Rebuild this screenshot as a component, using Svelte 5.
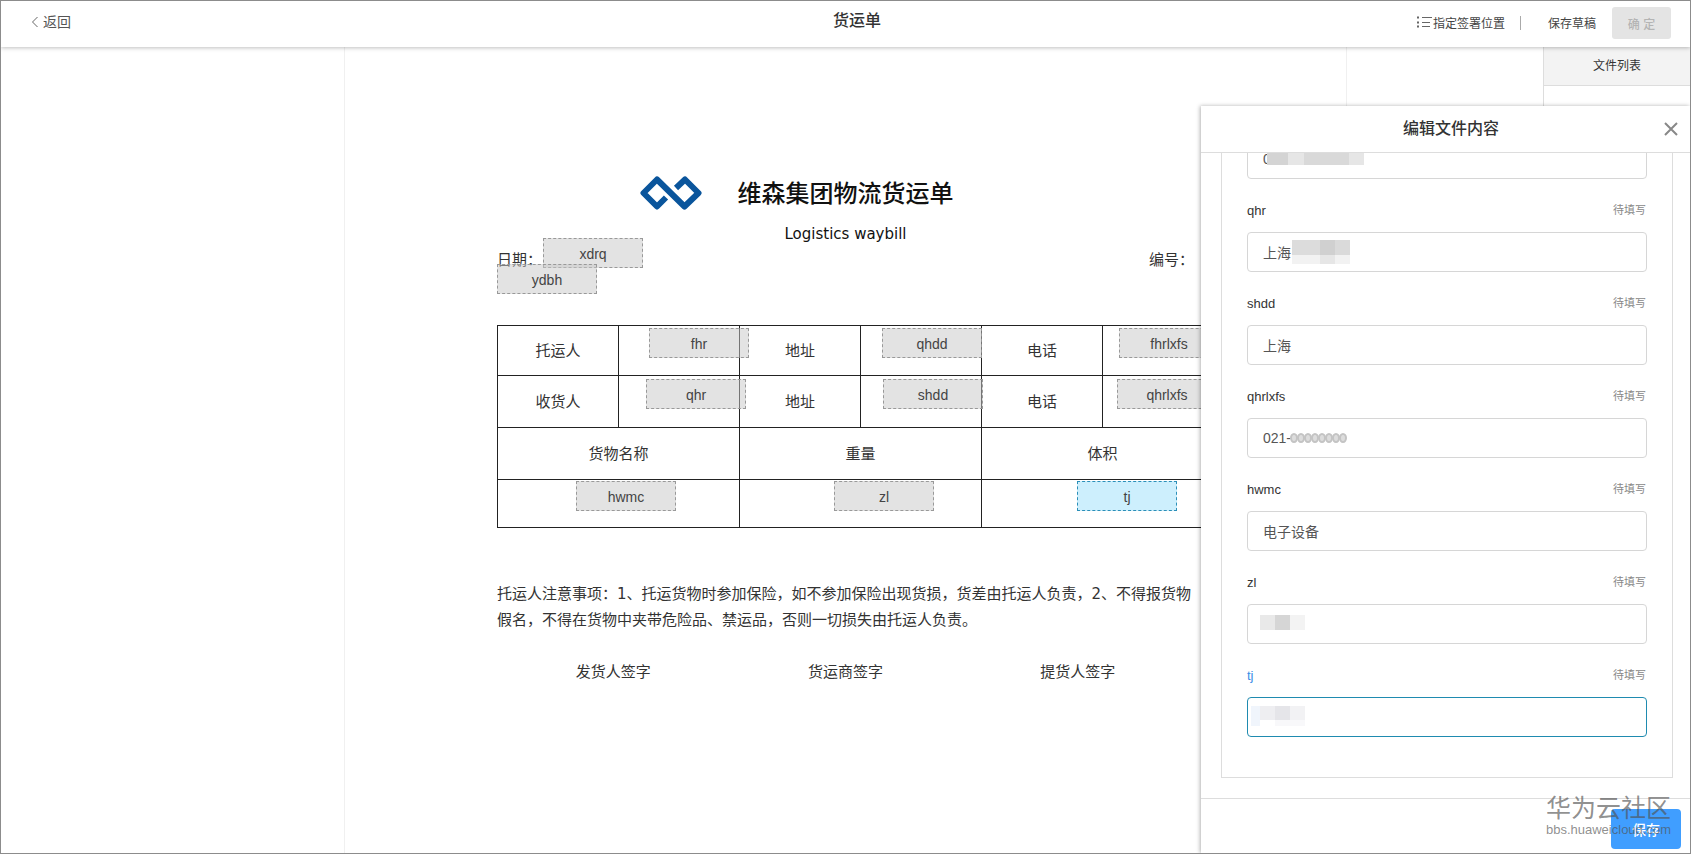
<script lang="ts">
    let tags = [
        { name: "xdrq", x: 198, y: 191 },
        { name: "ydbh", x: 152, y: 217 },
        { name: "fhr", x: 304, y: 281 },
        { name: "qhdd", x: 537, y: 281 },
        { name: "fhrlxfs", x: 774, y: 281 },
        { name: "qhr", x: 301, y: 332 },
        { name: "shdd", x: 538, y: 332 },
        { name: "qhrlxfs", x: 772, y: 332 },
        { name: "hwmc", x: 231, y: 434 },
        { name: "zl", x: 489, y: 434 },
        { name: "tj", x: 732, y: 434 },
    ];

    // mask: [x, y, width, height, colour] blocks hiding part of the value
    let fields = [
        {
            name: "qhr",
            value: "上海",
            mask: [
                [45, 8, 28, 15, "#dcdcdc"],
                [73, 8, 15, 15, "#d0d0d0"],
                [88, 8, 15, 15, "#dadada"],
                [45, 23, 28, 9, "#f2f2f2"],
                [73, 23, 15, 9, "#e6e6e6"],
                [88, 23, 15, 9, "#f2f2f2"],
            ],
        },
        { name: "shdd", value: "上海", mask: [] },
        { name: "qhrlxfs", value: "021-", mask: [], dots: 8 },
        { name: "hwmc", value: "电子设备", mask: [] },
        {
            name: "zl",
            value: "",
            mask: [
                [13, 11, 15, 15, "#e9e9e9"],
                [28, 11, 15, 15, "#d6d6d6"],
                [43, 11, 15, 15, "#f3f3f3"],
            ],
        },
        {
            name: "tj",
            value: "",
            mask: [
                [4, 9, 9, 20, "#f0f5fc"],
                [13, 9, 15, 14, "#eeeef1"],
                [28, 9, 15, 14, "#e5e5e9"],
                [43, 9, 15, 14, "#f2f2f4"],
                [28, 23, 30, 6, "#f8f8fa"],
            ],
        },
    ];

    let active = "tj";
</script>

<div class="app">
    <header>
        <a class="back" href="#back">
            <svg width="8" height="12" viewBox="0 0 8 12"><path d="M6.5 1 1.5 6l5 5" /></svg>
            返回
        </a>
        <h1>货运单</h1>
        <div class="actions">
            <button class="link">
                <svg width="15" height="12" viewBox="0 0 15 12">
                    <path d="M5 1.500h10M5 6.500h8M5 10.500h8" />
                    <path class="bullets" d="M0 1.500h3M0 6.500h3M0 10.500h3" />
                </svg>
                指定签署位置
            </button>
            <span class="divider"></span>
            <button class="link draft">保存草稿</button>
            <button class="confirm" disabled>确 定</button>
        </div>
    </header>

    <main>
        <article>
            <div class="heading">
                <svg class="logo" width="62" height="34" viewBox="0 0 62 34">
                    <path d="M26 21.500 17 30.500 3.500 17 17 3.500 44.500 30.500 58.500 17 45 3.500 36 12" />
                </svg>
                <h2>维森集团物流货运单</h2>
            </div>
            <p class="subtitle">Logistics waybill</p>
            <div class="meta">
                <span>日期：</span>
                <span>编号：</span>
            </div>

            <table>
                <tbody>
                    <tr class="first">
                        <td>托运人</td><td></td><td>地址</td><td></td><td>电话</td><td></td>
                    </tr>
                    <tr>
                        <td>收货人</td><td></td><td>地址</td><td></td><td>电话</td><td></td>
                    </tr>
                    <tr>
                        <td colspan="2">货物名称</td><td colspan="2">重量</td><td colspan="2">体积</td>
                    </tr>
                    <tr class="last">
                        <td colspan="2"></td><td colspan="2"></td><td colspan="2"></td>
                    </tr>
                </tbody>
            </table>

            <p class="notice">
                托运人注意事项：1、托运货物时参加保险，如不参加保险出现货损，货差由托运人负责，2、不得报货物假名，不得在货物中夹带危险品、禁运品，否则一切损失由托运人负责。
            </p>
            <div class="signs">
                <span>发货人签字</span>
                <span>货运商签字</span>
                <span>提货人签字</span>
            </div>

            {#each tags as tag}
                <button
                    class="tag"
                    class:active={tag.name === active}
                    style="left: {tag.x}px; top: {tag.y}px"
                    on:click={() => (active = tag.name)}>{tag.name}</button>
            {/each}
        </article>

        <aside class="files">
            <h3>文件列表</h3>
        </aside>
    </main>

    <section class="drawer">
        <div class="drawer-head">
            <h2>编辑文件内容</h2>
            <button class="close" aria-label="关闭">
                <svg width="14" height="14" viewBox="0 0 14 14"><path d="M1 1l12 12M13 1 1 13" /></svg>
            </button>
        </div>

        <div class="drawer-body">
            <form id="content">
                <div class="control">
                    <input type="text" value="0" aria-label="fhrlxfs" />
                    <svg class="mask" width="120" height="38">
                        <rect x="20" y="12" width="21" height="14" fill="#d4d4d4" />
                        <rect x="41" y="12" width="16" height="14" fill="#e6e6e6" />
                        <rect x="57" y="12" width="45" height="14" fill="#d9d9d9" />
                        <rect x="102" y="12" width="15" height="14" fill="#e6e6e6" />
                    </svg>
                </div>
                {#each fields as field}
                    <div class="field" class:active={field.name === active}>
                        <div class="caption">
                            <label for={field.name}>{field.name}</label>
                            <span>待填写</span>
                        </div>
                        <div class="control">
                            <input
                                type="text"
                                id={field.name}
                                value={field.value}
                                on:focus={() => (active = field.name)}
                            />
                            <svg class="mask" width="120" height="38">
                                {#each field.mask as [x, y, w, h, fill]}
                                    <rect {x} {y} width={w} height={h} {fill} />
                                {/each}
                                {#each Array(field.dots ?? 0) as _, i}
                                    <ellipse cx={47 + i * 7} cy="20" rx="3" ry="4" fill="#ddd" stroke="#c4c4c4" stroke-width="2" />
                                {/each}
                            </svg>
                        </div>
                    </div>
                {/each}
            </form>
        </div>

        <div class="drawer-foot">
            <button class="save" form="content" type="button">保存</button>
            <div class="watermark">
                <strong>华为云社区</strong>
                <span>bbs.huaweicloud.com</span>
            </div>
        </div>
    </section>
</div>

<style>
    :global(body) {
        margin: 0;
    }

    .app {
        position: relative;
        display: flex;
        flex-direction: column;
        box-sizing: border-box;
        height: 100vh;
        border: 1px solid #8c8c8c;
        overflow: hidden;
        background: #fff;
        color: #333;
        font-family: "Liberation Sans", "Noto Sans CJK SC", sans-serif;
        font-size: 14px;
    }

    h1,
    h2,
    h3,
    p {
        margin: 0;
    }

    button {
        padding: 0;
        border: none;
        background: none;
        color: inherit;
        font: inherit;
        cursor: pointer;
    }

    svg {
        fill: none;
        stroke: #666;
    }

    header {
        z-index: 1;
        flex: none;
        display: grid;
        grid-template-columns: 1fr auto 1fr;
        align-items: center;
        box-sizing: border-box;
        height: 46px;
        padding: 0 19px 2px 30px;
        background: #fff;
        box-shadow: 0 1px 4px rgba(0, 0, 0, 0.25);
    }

    .back {
        display: flex;
        align-items: center;
        gap: 4px;
        padding-bottom: 2px;
        color: #555;
        line-height: 20px;
        text-decoration: none;
    }

    h1 {
        padding: 0 0 4px 12px;
        font-size: 16px;
        font-weight: 500;
        line-height: 24px;
    }

    .actions {
        display: flex;
        align-items: center;
        justify-content: flex-end;
        font-size: 12px;
        color: #444;
    }

    .link {
        display: flex;
        align-items: center;
        gap: 1px;
        padding-bottom: 2px;
    }

    .link .bullets {
        stroke-dasharray: 2 1;
        stroke-width: 2;
    }

    .divider {
        width: 1px;
        height: 14px;
        margin: 0 27px 0 15px;
        background: #aaa;
    }

    .draft {
        margin-right: 16px;
    }

    .confirm {
        width: 59px;
        height: 32px;
        border-radius: 3px;
        background: #e4e4e4;
        color: #b4b4b4;
        font-weight: 500;
    }

    main {
        flex: 1;
        display: grid;
        grid-template-columns: 1fr 1003px 1fr;
        min-height: 0;
    }

    article {
        position: relative;
        grid-column: 2;
        box-sizing: border-box;
        padding: 129px 152px 0;
        border: solid #f0f0f0;
        border-width: 0 1px;
        font-family: "DejaVu Sans", "Noto Sans CJK SC", sans-serif;
        font-size: 15px;
        line-height: 26px;
    }

    .heading {
        display: grid;
        grid-template-columns: 1fr auto 1fr;
        column-gap: 36px;
        align-items: center;
        height: 34px;
    }

    .logo {
        justify-self: end;
        stroke: #0a559c;
        stroke-width: 6;
        stroke-linejoin: round;
    }

    .heading h2 {
        padding-top: 2px;
        color: #111;
        font-size: 24px;
        font-weight: 500;
    }

    .subtitle {
        margin-top: 11px;
        color: #111;
        text-align: center;
    }

    .meta {
        display: flex;
        justify-content: space-between;
        margin-bottom: 52px;
    }

    table {
        width: 727px;
        table-layout: fixed;
        border-collapse: collapse;
        text-align: center;
    }

    tr {
        height: 52px;
    }

    .first {
        height: 50px;
    }

    .last {
        height: 48px;
    }

    td {
        padding: 0;
        border: 1px solid #222;
    }

    .notice {
        margin: 53px 0 26px;
        line-break: anywhere;
    }

    .signs {
        display: grid;
        grid-template-columns: repeat(3, 1fr);
        text-align: center;
    }

    .tag {
        position: absolute;
        width: 100px;
        height: 30px;
        padding-top: 1px;
        border: 1px dashed #999;
        background: rgba(200, 200, 200, 0.5);
        color: #444;
        font-family: "Liberation Sans", sans-serif;
        font-size: 14px;
    }

    .tag.active {
        border-color: #2b8fb8;
        background: #cdeffd;
    }

    .files {
        justify-self: end;
        width: 146px;
        border-left: 1px solid #ddd;
    }

    .files h3 {
        border-bottom: 1px solid #ddd;
        background: #f3f3f3;
        font-size: 12px;
        font-weight: 400;
        line-height: 38px;
        text-align: center;
    }

    .drawer {
        position: absolute;
        z-index: 2;
        top: 105px;
        right: 0;
        bottom: 0;
        display: flex;
        flex-direction: column;
        width: 489px;
        background: #fff;
        box-shadow: -1px 0 4px rgba(0, 0, 0, 0.3);
    }

    .drawer-head {
        display: grid;
        grid-template-columns: 1fr auto 1fr;
        align-items: center;
        padding: 0 12px 0 23px;
        border-bottom: 1px solid #ddd;
    }

    .drawer-head h2 {
        grid-column: 2;
        font-size: 16px;
        font-weight: 500;
        line-height: 46px;
    }

    .close {
        justify-self: end;
        display: flex;
    }

    .close svg {
        stroke: #888;
        stroke-width: 2;
    }

    /* scrolled to the end, earlier fields run out under the title bar */
    .drawer-body {
        flex: 1;
        display: flex;
        flex-direction: column;
        justify-content: flex-end;
        min-height: 0;
        padding: 0 17px 20px 20px;
        overflow: hidden;
    }

    form {
        flex: none;
        padding: 24px 25px 40px;
        border: 1px solid #ddd;
    }

    .caption {
        display: flex;
        justify-content: space-between;
        align-items: center;
        height: 20px;
        padding: 21px 1px 12px 0;
        font-size: 13px;
    }

    .caption span {
        padding-bottom: 2px;
        color: #888;
        font-size: 11px;
    }

    .control {
        position: relative;
    }

    input {
        display: block;
        box-sizing: border-box;
        width: 100%;
        height: 40px;
        padding: 0 15px;
        border: 1px solid #d6d6d6;
        border-radius: 4px;
        outline: none;
        background: #fff;
        color: #555;
        font: inherit;
    }

    .mask {
        position: absolute;
        top: 0;
        left: 0;
        stroke: none;
        pointer-events: none;
    }

    .field.active label {
        color: #3a8ee6;
    }

    .field.active input {
        border-color: #1f8bb0;
    }

    .drawer-foot {
        position: relative;
        display: flex;
        justify-content: flex-end;
        padding: 10px 9px 4px;
        border-top: 1px solid #ddd;
    }

    .save {
        width: 70px;
        height: 40px;
        border-radius: 4px;
        background: #409eff;
        color: #fff;
        font-weight: 500;
    }

    .watermark {
        position: absolute;
        right: 19px;
        bottom: 15px;
        display: flex;
        flex-direction: column;
        color: rgba(80, 80, 80, 0.65);
        pointer-events: none;
    }

    .watermark strong {
        font-size: 25px;
        font-weight: 400;
        line-height: 28px;
    }

    .watermark span {
        font-size: 13px;
        line-height: 16px;
    }
</style>
